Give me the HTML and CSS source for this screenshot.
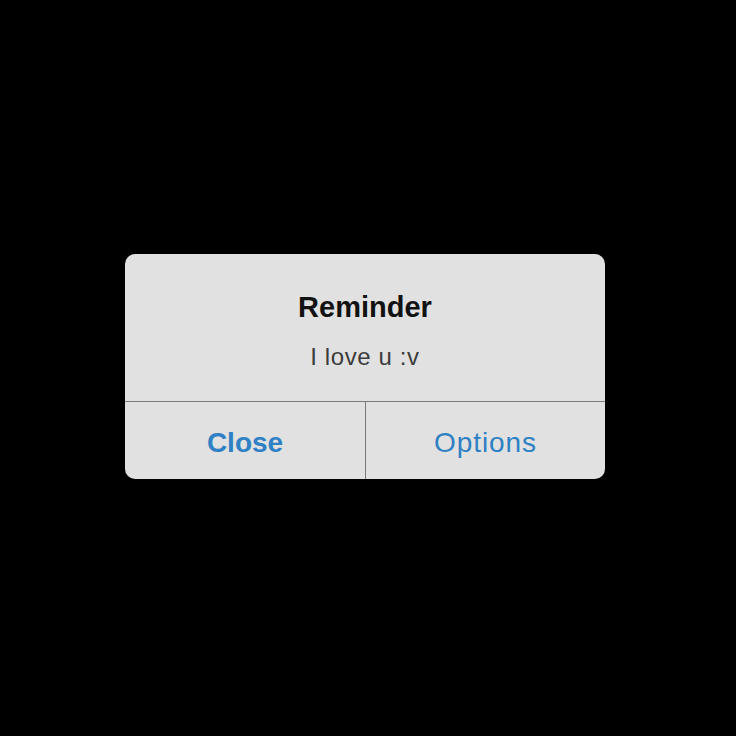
FILE: index.html
```html
<!DOCTYPE html>
<html>
<head>
<meta charset="utf-8">
<link rel="stylesheet" href="styles.css">
</head>
<body>
<div class="screen">
  <div class="alert">
    <div class="alert-body">
      <div class="alert-title">Reminder</div>
      <div class="alert-message">I love u :v</div>
    </div>
    <div class="alert-actions">
      <div class="alert-btn alert-btn-primary">Close</div>
      <div class="alert-btn">Options</div>
    </div>
  </div>
</div>
</body>
</html>
```
FILE: styles.css
```css
html, body {
  margin: 0;
  padding: 0;
  background: #000;
}
.screen {
  width: 736px;
  height: 736px;
  box-sizing: border-box;
  padding-top: 254px;
  padding-left: 125px;
  font-family: "Liberation Sans", Arial, sans-serif;
}
.alert {
  width: 480px;
  background: #e1e1e1;
  border-radius: 10px;
  overflow: hidden;
}
.alert-body {
  height: 148px;
  box-sizing: border-box;
  padding-top: 36px;
  text-align: center;
  border-bottom: 1px solid #7a7a7a;
}
.alert-title {
  font-size: 29px;
  line-height: 34px;
  font-weight: bold;
  color: #121212;
}
.alert-message {
  margin-top: 18px;
  font-size: 24px;
  line-height: 30px;
  letter-spacing: 0.6px;
  color: #3c3c3c;
}
.alert-actions {
  display: grid;
  grid-template-columns: 240px 1px 1fr;
  height: 77px;
}
.alert-btn {
  grid-column: 3;
  display: flex;
  align-items: center;
  justify-content: center;
  padding-top: 4px;
  box-sizing: border-box;
  font-size: 28px;
  letter-spacing: 0.9px;
  color: #2f80c4;
}
.alert-btn-primary {
  grid-column: 1;
  font-weight: bold;
  letter-spacing: 0;
  border-right: 1px solid #7a7a7a;
  margin-right: -1px;
}
```
